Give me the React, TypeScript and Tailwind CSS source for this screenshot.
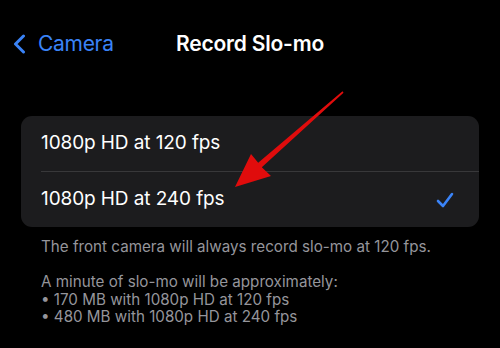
import React from "react";

export default function App() {
  const font = { fontFamily: "Inter, 'Noto Sans', 'Liberation Sans', sans-serif" };
  return (
    <div className="relative w-[500px] h-[348px] bg-black overflow-hidden" style={font}>
      <div className="grid grid-cols-[1fr_auto_1fr] items-center h-[44px] mt-[22px] px-[13px]">
        <div className="flex items-center gap-[12px] text-[#3a83f7]">
          <svg width="13" height="20" viewBox="0 0 13 20" fill="none">
            <path d="M10.5 2 L2.5 10 L10.5 18" stroke="#3a83f7" strokeWidth="3" strokeLinecap="round" strokeLinejoin="round" />
          </svg>
          <span className="text-[21px] tracking-[-0.3px]">Camera</span>
        </div>
        <div className="text-white text-[21px] font-semibold tracking-[-0.2px]">Record Slo-mo</div>
        <div />
      </div>

      <div className="mx-[21px] mt-[50px] rounded-[11px] bg-[#1c1c1e]">
        <div className="flex items-center h-[55px] pl-[20px] text-white text-[19px] tracking-[-0.1px]">
          1080p HD at 120 fps
        </div>
        <div className="ml-[20px] h-px bg-[#38383a]" />
        <div className="flex items-center justify-between h-[55px] pl-[20px] pr-[25px] text-white text-[19px] tracking-[-0.1px]">
          <span>1080p HD at 240 fps</span>
          <svg width="18" height="16" viewBox="0 0 18 16" fill="none">
            <path d="M2 9 L7 14 L16 2" stroke="#3a83f7" strokeWidth="2.6" strokeLinecap="round" strokeLinejoin="round" />
          </svg>
        </div>
      </div>

      <div className="px-[41px] mt-[11px] text-[#95959b] text-[15.2px] leading-[17.5px]">
        <p>The front camera will always record slo-mo at 120 fps.</p>
        <p className="mt-[17.5px]">A minute of slo-mo will be approximately:</p>
        <p>• 170 MB with 1080p HD at 120 fps</p>
        <p>• 480 MB with 1080p HD at 240 fps</p>
      </div>

      <svg className="absolute left-0 top-0 pointer-events-none" width="500" height="348" viewBox="0 0 500 348">
        <polygon
          points="235,187 251,154 258.2,162.8 342.5,91.3 343.5,92.7 261.8,167.2 271,176"
          fill="#e00c0c"
        />
      </svg>
    </div>
  );
}
